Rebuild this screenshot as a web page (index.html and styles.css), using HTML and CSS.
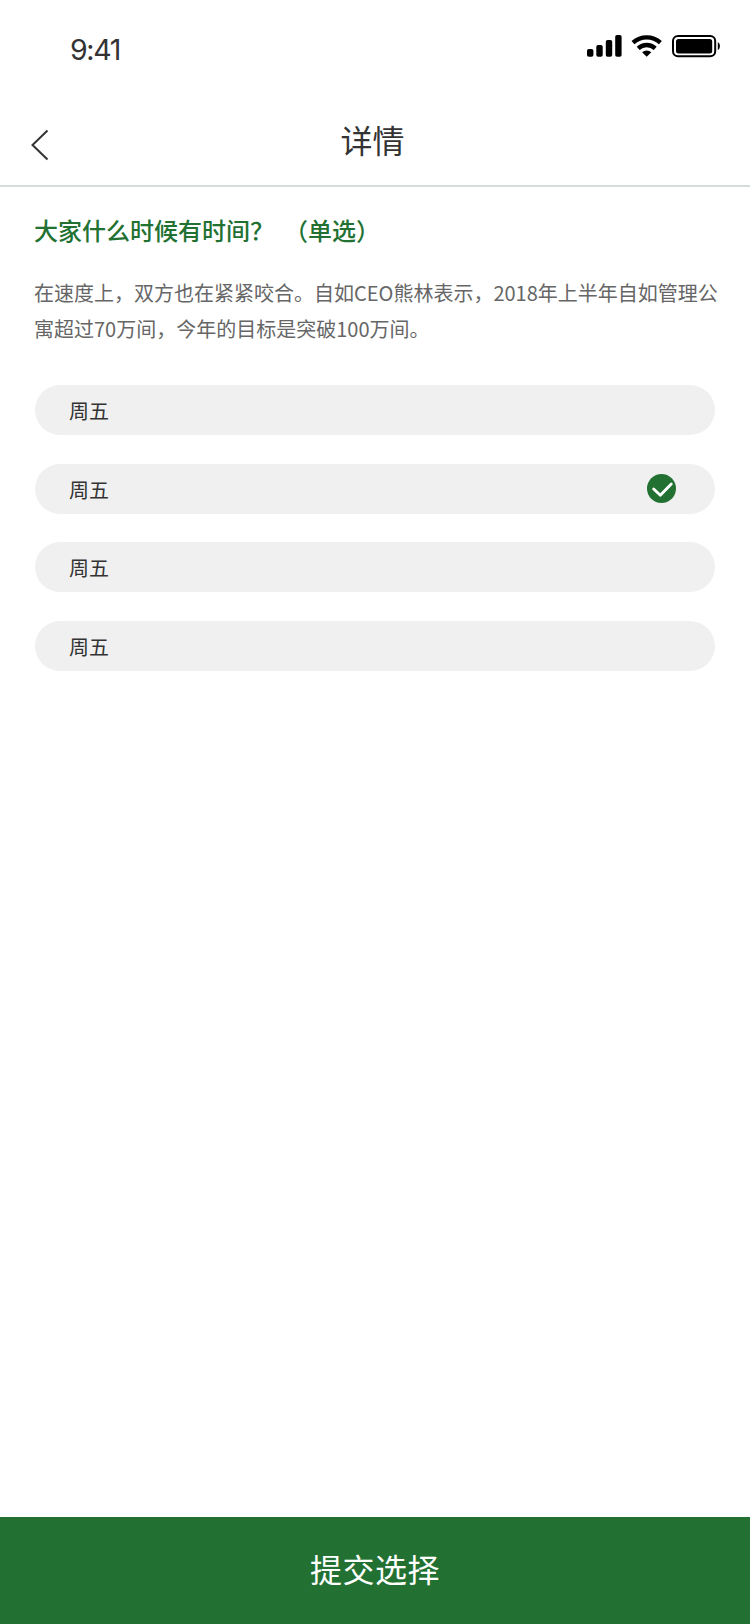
FILE: index.html
```html
<!DOCTYPE html>
<html lang="zh-CN">
<head>
<meta charset="utf-8">
<title>详情</title>
<link rel="stylesheet" href="styles.css">
</head>
<body>
<div class="screen">
  <div class="status-bar">
    <span class="time">9:41</span>
    <svg class="status-icons" width="138" height="26" viewBox="0 0 138 26">
      <rect x="1" y="16" width="6.4" height="7.8" rx="1.8"/>
      <rect x="10.3" y="12" width="6.4" height="11.8" rx="1.8"/>
      <rect x="19.8" y="7" width="6.4" height="16.8" rx="1.8"/>
      <rect x="29.2" y="2" width="6.4" height="21.8" rx="1.8"/>
      <g fill="none" stroke="#000" stroke-width="4.4">
        <path d="M47 9.6a20.5 20.5 0 0 1 27.4 0"/>
        <path d="M52.2 15.3a12.6 12.6 0 0 1 17 0"/>
      </g>
      <path d="M60.7 23.8l-4.6-4.6a7 7 0 0 1 9.2 0z"/>
      <rect x="87" y="3" width="42.2" height="20.2" rx="5" fill="none" stroke="#000" stroke-width="2"/>
      <rect x="90" y="6" width="36.2" height="14.4" rx="2.5"/>
      <path d="M131.8 9.2c2.8 1 2.8 6.600 0 7.800z"/>
    </svg>
  </div>
  <header class="nav">
    <svg class="back" width="20" height="34" viewBox="0 0 20 34"><path d="M17.500 2.500L2.500 17L17.500 31.500"/></svg>
    <h1 class="nav-title">详情</h1>
  </header>
  <main class="content">
    <h2 class="question">大家什么时候有时间？<span class="kind">（单选）</span></h2>
    <p class="desc">在速度上，双方也在紧紧咬合。自如CEO熊林表示，2018年上半年自如管理公寓超过70万间，今年的目标是突破100万间。</p>
    <ul class="options">
      <li class="option">周五</li>
      <li class="option selected"><span>周五</span>
        <svg class="check" width="29" height="29" viewBox="0 0 29 29"><circle cx="14.500" cy="14.500" r="14.500"/><path d="M6.700 15l6.600 6.200l11-11.300"/></svg>
      </li>
      <li class="option">周五</li>
      <li class="option">周五</li>
    </ul>
  </main>
  <button class="submit">提交选择</button>
</div>
</body>
</html>
```

FILE: styles.css
```css
* { box-sizing: border-box; }
body {
  margin: 0;
  background: #fff;
  color: #333;
  font-family: "Noto Sans CJK SC", sans-serif;
}
.screen {
  display: flex;
  flex-direction: column;
  height: 1624px;
}
.status-bar {
  display: flex;
  justify-content: space-between;
  height: 95px;
  padding: 33px 26px 0 70px;
}
.time {
  font: 400 28.5px/34px Inter, sans-serif;
  letter-spacing: -1.300px;
}
.status-icons { display: block; }
.nav {
  display: grid;
  grid-template-columns: 60px 1fr 65px;
  height: 92px;
  border-bottom: 2px solid #d3dedb;
}
.back {
  margin: 33px 0 0 30px;
  fill: none;
  stroke: #333;
  stroke-width: 2;
}
.nav-title {
  margin: 20px 0 0;
  font-size: 32px;
  font-weight: 400;
  line-height: 48px;
  text-align: center;
}
.content {
  flex: 1;
  padding: 25px 31px 0 34px;
}
.question {
  margin: 0;
  color: #227133;
  font-size: 24px;
  font-weight: 500;
  line-height: 36px;
}
.kind { margin-left: 10px; }
.desc {
  margin: 27px 0 0;
  color: #666;
  font-size: 20px;
  line-height: 36px;
}
.options {
  display: grid;
  gap: 28.700px;
  margin: 38px 0 0 1px;
  padding: 0;
  width: 680px;
  list-style: none;
}
.option {
  display: flex;
  align-items: center;
  justify-content: space-between;
  height: 50px;
  padding: 0 39px 0 34px;
  border-radius: 25px;
  background: #f0f0f0;
  font-size: 20px;
}
.selected span { padding-top: 1px; }
.check circle { fill: #227133; }
.check path {
  fill: none;
  stroke: #fff;
  stroke-width: 2.800;
  stroke-linecap: round;
  stroke-linejoin: round;
}
.submit {
  height: 107px;
  padding: 0 0 5px;
  border: 0;
  background: #227133;
  color: #fff;
  font: 400 32px/48px "Noto Sans CJK SC", sans-serif;
  letter-spacing: 0.5px;
}
```
